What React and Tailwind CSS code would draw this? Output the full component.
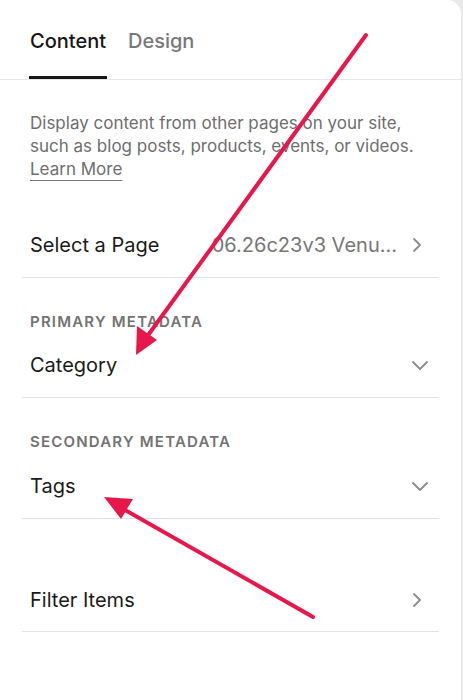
const ChevronRight = () => (
  <svg width="12" height="16" viewBox="0 0 12 16" fill="none">
    <polyline points="3,2 9,8 3,14" stroke="#8c8c8c" strokeWidth="1.8" strokeLinecap="round" strokeLinejoin="round" />
  </svg>
);

const ChevronDown = () => (
  <svg width="18" height="12" viewBox="0 0 18 12" fill="none">
    <polyline points="2,3 9,10 16,3" stroke="#8c8c8c" strokeWidth="1.8" strokeLinecap="round" strokeLinejoin="round" />
  </svg>
);

const Row = ({ label, value, icon, className = '' }) => (
  <div className={`mx-[22px] pl-2 flex items-center justify-between border-b border-[#e3e3e3] ${className}`}>
    <span className="text-[20px] text-[#1a1a1a]">{label}</span>
    <div className="flex items-center gap-[14px]">
      {value && <span className="text-[20px] text-[#767676]">{value}</span>}
      {icon}
    </div>
  </div>
);

const SectionLabel = ({ children }) => (
  <div className="px-[30px] pt-[34px] text-[15px] font-semibold tracking-[0.08em] text-[#737373] leading-[20px]">
    {children}
  </div>
);

export default function App() {
  return (
    <div className="relative w-[463px] h-[700px] bg-[#e9e9e9] overflow-hidden" style={{ fontFamily: 'Inter, "Liberation Sans", sans-serif' }}>
      <div className="w-[461px] h-[700px] bg-white rounded-tr-[14px]">
        {/* Tabs */}
        <div className="flex gap-[22px] px-[30px] pt-[26px] border-b border-[#e6e6e6] h-[80px]">
          <div className="flex flex-col justify-between">
            <span className="text-[20px] font-medium text-[#161616] leading-[30px]">Content</span>
            <div className="h-[3px] bg-[#161616] -mx-[1px]" />
          </div>
          <span className="text-[20px] font-medium text-[#777777] leading-[30px]">Design</span>
        </div>

        {/* Description */}
        <p className="px-[30px] pt-[32px] text-[17px] leading-[23px] text-[#6e6e6e]">
          Display content from other pages on your site,
          <br />
          such as blog posts, products, events, or videos.
          <br />
          <span className="underline underline-offset-[5px] decoration-[#7a7a7a]">Learn More</span>
        </p>

        <Row label="Select a Page" value="06.26c23v3 Venu..." icon={<ChevronRight />} className="h-[66px] mt-[31px] pr-[16px]" />

        <SectionLabel>PRIMARY METADATA</SectionLabel>
        <Row label="Category" icon={<ChevronDown />} className="h-[66px] pr-[10px]" />

        <SectionLabel>SECONDARY METADATA</SectionLabel>
        <Row label="Tags" icon={<ChevronDown />} className="h-[67px] pt-[2px] pr-[10px]" />

        <Row label="Filter Items" icon={<ChevronRight />} className="h-[113px] pt-[49px] pr-[16px]" />
      </div>

      {/* annotation arrows */}
      <svg className="absolute inset-0 pointer-events-none" width="463" height="700" viewBox="0 0 463 700">
        <line x1="366" y1="35" x2="146" y2="338" stroke="#e8174b" strokeWidth="4" strokeLinecap="round" />
        <polygon points="136,355 137,326 157,340" fill="#e8174b" />
        <line x1="313" y1="617" x2="118" y2="506" stroke="#e8174b" strokeWidth="4" strokeLinecap="round" />
        <polygon points="104,497 133,499 121,519" fill="#e8174b" />
      </svg>
    </div>
  );
}
